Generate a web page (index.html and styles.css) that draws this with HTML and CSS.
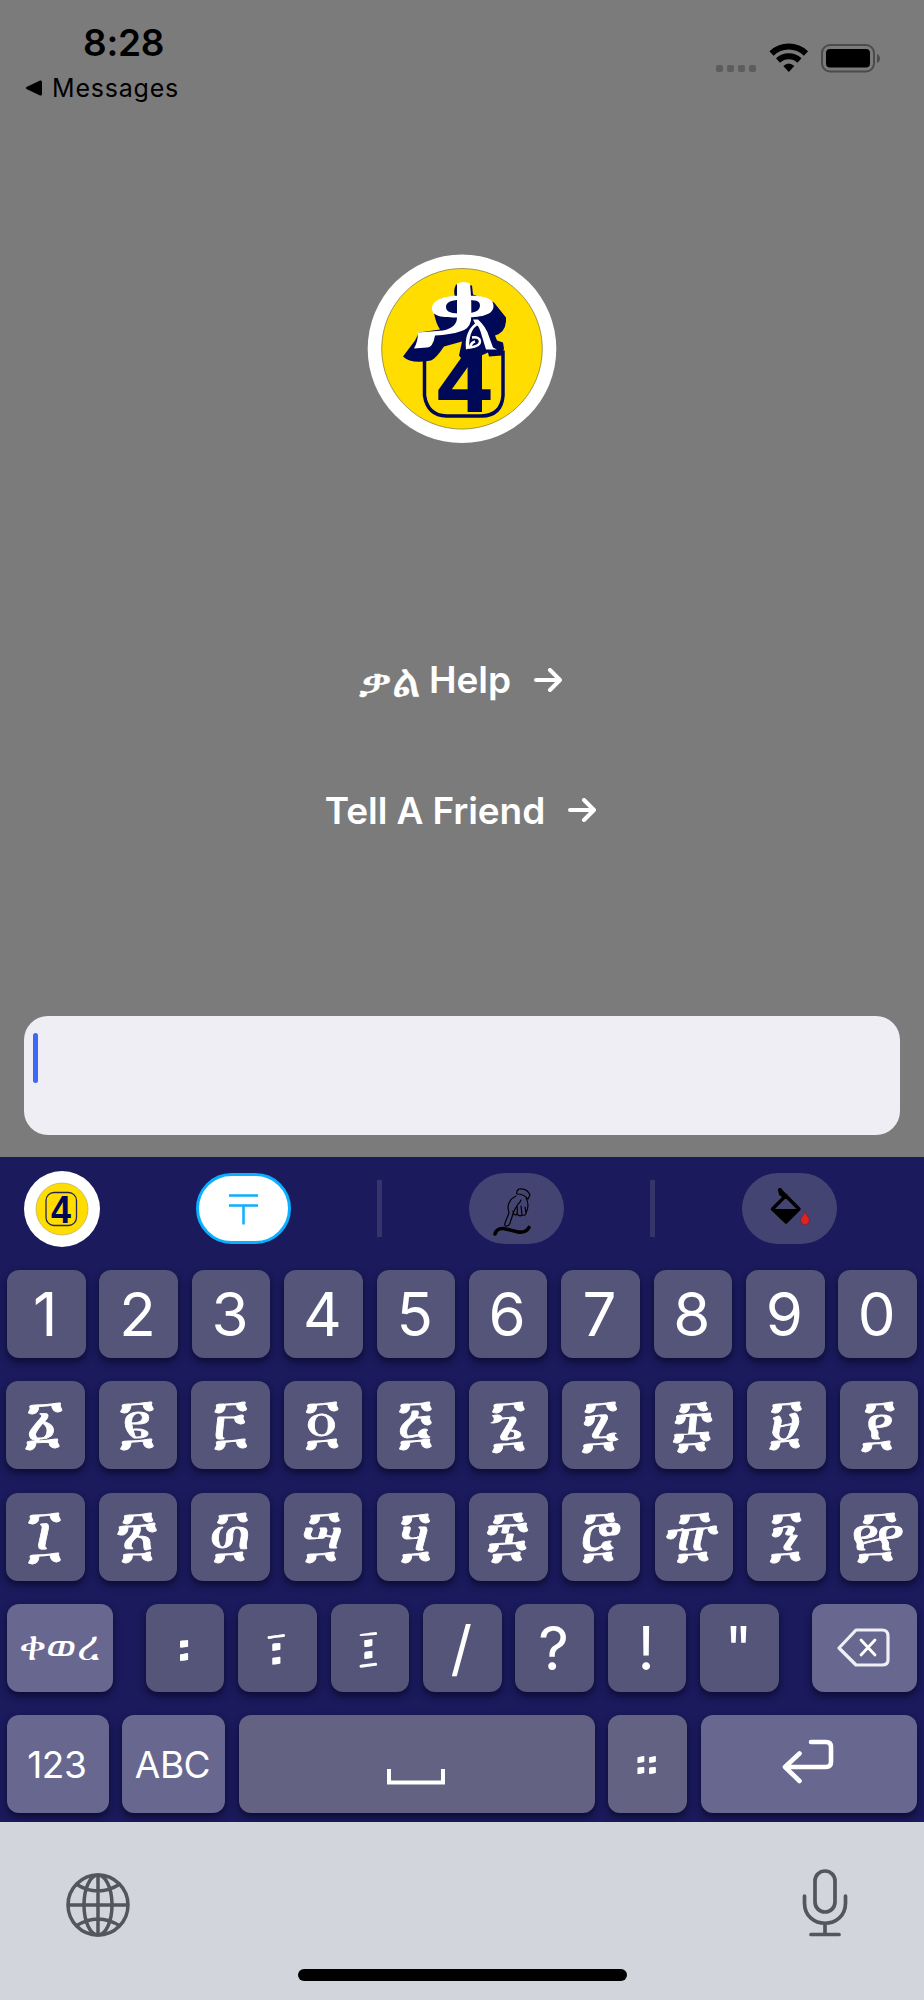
FILE: index.html
```
<!DOCTYPE html>
<html lang="am">
<head>
    <meta charset="utf-8">
    <title>ቃል</title>
    <link rel="stylesheet" href="styles.css">
</head>
<body>
    <div class="status">
        <div class="status-left">
            <div class="time">8:28</div>
            <div class="back"><svg width="17" height="16" viewBox="0 0 17 16"><path d="M1.5 7 15 .5Q17 0 17 2v12q0 2-2 1.500L1.500 9Q0 8 1.500 7Z"/></svg>Messages</div>
        </div>
        <div class="status-right">
            <svg width="170" height="34" viewBox="0 0 170 34">
                <g fill="#5d5d5d"><rect x="6" y="24" width="7" height="7" rx="2"/><rect x="17" y="24" width="7" height="7" rx="2"/><rect x="28" y="24" width="7" height="7" rx="2"/><rect x="39" y="24" width="7" height="7" rx="2"/></g>
                <g fill="none" stroke="#000" stroke-width="6"><path d="M61.500 12.500a25 25 0 0 1 34.500 0"/><path d="M68 19.500a16 16 0 0 1 21.500 0"/></g>
                <path d="M73.300 25q5.500-5 11 0L78.800 31Z"/>
                <rect x="112" y="4" width="52" height="26.500" rx="8" fill="none" stroke="#4b4b4b" stroke-width="2"/>
                <rect x="116" y="8" width="44" height="18.500" rx="4"/>
                <path d="M167 13q3 1.500 3 4.500t-3 4.500Z" fill="#4b4b4b"/>
            </svg>
        </div>
    </div>

    <!-- app screen -->
    <div class="main">
        <svg class="logo" width="190" height="190" viewBox="15 13.500 190 190">
            <circle cx="110" cy="108.300" r="94.300" fill="#fff"/>
            <circle cx="110" cy="108.300" r="80.300" fill="#ffdd00" stroke="#77733a" stroke-width=".7"/>
            <path d="M72.500 112v43q3 20 22 20.500h35q20-.5 21.500-20.500v-45" fill="none" stroke="#000957" stroke-width="3.500"/>
            <path d="M104 44q-3 6-1 12L82 73q2 10 6 16l-21 3-4 8-12 16q8 8 28 4 5-2 13-14l18-5-3 14 4 5 14-3 11-5 1 4 13-1 2-7-1-6-6-2-2-5q10-3 11-14v-4L142 62l-21-8-1-9Z" fill="#000957"/>
            <text class="logo-four" x="112" y="170" textLength="52" lengthAdjust="spacingAndGlyphs">4</text>
            <path d="M110.500 55c17 0 31 1 31 10.500S128 77 110.500 77 80 77 80 68s13-13 30.500-13Zm0 4.500C100 59 94 61 94 66.500S100 73 110.500 73 128 71 128 65s-7-5.500-17.500-5.500Z" fill="#fff" fill-rule="evenodd"/>
            <path d="M105 43q7-3 13 0 2 20 1 37-2 9-11 11-9 3-25 4-2 12-8 12l-13 1q4-7 4-16 13-1 25-2 14-3 14-13Z" fill="#fff"/>
            <path d="M121 79 126 79Q134 86 137 96L141 107 145 109 134 109 130 96Q127 85 125 85 117 90 117 108L114 109Q112 92 123 83Z" fill="#fff"/>
            <path d="M120 97q8-1 8 4t-10 6q1-5 5-6" stroke="#fff" stroke-width="2.500" fill="none"/>
        </svg>

        <div class="links">
            <a class="link"><span class="geez">ቃል</span><span class="help-text">Help</span><svg class="arrow" viewBox="0 0 28 24"><path d="M2 12h24M16 2l10 10-10 10"/></svg></a>
            <a class="link"><span class="friend-text">Tell A Friend</span><svg class="arrow" viewBox="0 0 28 24"><path d="M2 12h24M16 2l10 10-10 10"/></svg></a>
        </div>

        <div class="input"><div class="cursor"></div></div>
    </div>

    <div class="keyboard">
        <div class="toolbar">
            <svg class="mini-logo" width="76" height="76" viewBox="0 0 76 76">
                <circle cx="38" cy="38" r="38" fill="#fff"/>
                <circle cx="38" cy="38" r="26" fill="#ffdd00" stroke="#b5ae67" stroke-width=".7"/>
                <rect x="22" y="21.500" width="30.500" height="33" rx="8" fill="none" stroke="#26245a" stroke-width="1.300"/>
                <text class="mini-four" x="37" y="51.500" textLength="20" lengthAdjust="spacingAndGlyphs">4</text>
            </svg>
            <div class="pill active"><svg width="29" height="32" viewBox="0 0 29 32"><path d="M0 2.500h29M0 12.500h29M14.500 12.500v19" fill="none" stroke="#0aafff" stroke-width="2.500"/></svg></div>
            <div class="sep"></div>
            <div class="pill">
                <svg width="95" height="71" viewBox="0 0 95 71" fill="none" stroke="#000" stroke-width="1.200" stroke-linejoin="round" stroke-linecap="round">
                    <path d="M48 21q-1-3 2-5 8-1 11 6l-2 4q-4-5-11-5ZM47 23q-8 4-8 12l1 5-4 10q-1 4 2 3 2 0 3-3l4-12M57 25q4 7 0 15M44 38q0 4 3 4 2-1 1-9m0 8q3 3 5 1l-1-9m1 9q4 1 4-2l-1-6M45 38l4-7q2-1 3-4"/>
                    <path d="M26 61q2-6 8-5.500 8 1.500 15 3.500 8 1 11-4.500" stroke-width="3.600"/>
                </svg>
            </div>
            <div class="sep"></div>
            <div class="pill">
                <svg width="95" height="71" viewBox="0 0 95 71">
                    <path d="M38 17 57 36 44 49 30.500 36 44 22.500" fill="none" stroke="#000" stroke-width="3.500" stroke-linejoin="round" stroke-linecap="round"/>
                    <path d="M31 36h26L44 49.500Z"/><path d="m38 17 1 4 5 3" fill="none" stroke="#000" stroke-width="4" stroke-linecap="round"/>
                    <path d="M63 38q1 4 4 7a4.300 5 0 1 1-8 0q3-3 4-7Z" fill="#e3221f" stroke="#50203c" stroke-width=".5"/>
                </svg>
            </div>
        </div>

        <div class="row">
            <div class="key">1</div><div class="key">2</div><div class="key">3</div><div class="key">4</div><div class="key">5</div><div class="key">6</div><div class="key">7</div><div class="key">8</div><div class="key">9</div><div class="key">0</div>
        </div>
        <div class="row numerals">
            <div class="key">፩</div><div class="key">፪</div><div class="key">፫</div><div class="key">፬</div><div class="key">፭</div><div class="key">፮</div><div class="key">፯</div><div class="key">፰</div><div class="key">፱</div><div class="key">፻</div>
        </div>
        <div class="row numerals">
            <div class="key">፲</div><div class="key">፳</div><div class="key">፴</div><div class="key">፵</div><div class="key">፶</div><div class="key">፷</div><div class="key">፸</div><div class="key">፹</div><div class="key">፺</div><div class="key">፼</div>
        </div>
        <div class="row marks">
            <div class="key fn geez-fn">ቀወረ</div>
            <div class="key">፡</div><div class="key">፣</div><div class="key">፤</div><div class="key">/</div><div class="key">?</div><div class="key">!</div><div class="key">"</div>
            <div class="key fn">
                <svg width="54" height="40" viewBox="0 0 54 40" fill="none" stroke="#fff" stroke-width="3.200" stroke-linejoin="round" stroke-linecap="round"><path d="M19 2h26q6 0 6 6v24q0 5-6 5H19L2 20Z" opacity=".9"/><path d="m24 12 14 15m0-15L24 27" stroke-width="2.800"/></svg>
            </div>
        </div>
        <div class="row bottom">
            <div class="key fn">123</div>
            <div class="key fn">ABC</div>
            <div class="key space"><svg width="58" height="16" viewBox="0 0 58 16"><path d="M2 0v13.500h54V0" fill="none" stroke="#fff" stroke-width="4"/></svg></div>
            <div class="key stop">።</div>
            <div class="key fn enter"><svg width="52" height="45" viewBox="0 0 52 45" fill="none" stroke="#fff" stroke-width="4.600" stroke-linecap="round" stroke-linejoin="round"><path d="M29 3h15q5 0 5 5v15q0 5-5 5H3M17.500 14.500 3 28l14.500 14"/></svg></div>
        </div>
    </div>

    <div class="dock">
        <div class="dock-icons">
            <svg width="66" height="66" viewBox="0 0 66 66" fill="none" stroke="#53565d" stroke-width="3.500"><circle cx="33" cy="33" r="30"/><ellipse cx="33" cy="33" rx="14" ry="30"/><path d="M33 2.500v61M2.500 33h61M11 12q22 14 44 0M11 54q22-14 44 0"/></svg>
            <svg width="46" height="68" viewBox="0 0 46 68" fill="none" stroke="#53565d" stroke-width="3.700" stroke-linecap="round"><rect x="13" y="2" width="20" height="41" rx="10"/><path d="M2.500 27v7c0 27 41 27 41 0v-7M23 55v10M9 65.500h28"/></svg>
        </div>
        <div class="home-bar"></div>
    </div>
</body>
</html>
```
FILE: styles.css
```
* {
    box-sizing: border-box;
}

body {
    margin: 0;
    width: 924px;
    height: 2000px;
    background: #7b7b7b;
    font-family: Inter, "Noto Sans", sans-serif;
    overflow: hidden;
    display: flex;
    flex-direction: column;
}

svg {
    display: block;
    flex: none;
}

.status {
    height: 120px;
    display: flex;
    justify-content: space-between;
    padding: 20px 44px 0 25px;
}

.time {
    padding-left: 58px;
    font-size: 37px;
    font-weight: 600;
    line-height: 45px;
    letter-spacing: -0.3px;
}

.back {
    display: flex;
    align-items: center;
    gap: 10px;
    margin-top: 8px;
    font-size: 25px;
    line-height: 30px;
    letter-spacing: 0.8px;
}

.status-right {
    padding-top: 21px;
}

.main {
    height: 1037px;
    display: flex;
    flex-direction: column;
    align-items: center;
    padding-top: 134px;
}

.logo-four,
.mini-four {
    font-family: "Liberation Sans", Arial, sans-serif;
    font-weight: bold;
    fill: #000957;
    text-anchor: middle;
}

.logo-four {
    font-size: 86px;
    stroke: #000957;
    stroke-width: 2px;
}

.mini-four {
    font-size: 39px;
}

.links {
    display: flex;
    flex-direction: column;
    align-items: center;
    gap: 70px;
    margin-top: 206px;
    padding-right: 3px;
    color: #fff;
}

.link {
    display: flex;
    align-items: center;
    height: 60px;
    font-size: 37px;
    font-weight: 600;
    letter-spacing: -0.1px;
}

.help-text {
    margin-top: -1px;
}

.geez {
    width: 59px;
    margin-right: 11px;
    font-size: 45px;
    font-weight: 400;
    line-height: 60px;
    white-space: nowrap;
    -webkit-text-stroke: 0.5px #fff;
}

.arrow {
    width: 28px;
    height: 24px;
    margin-left: 23px;
    fill: none;
    stroke: #fff;
    stroke-width: 4;
    stroke-linecap: round;
    stroke-linejoin: round;
}

.input {
    width: 876px;
    height: 119px;
    margin-top: auto;
    margin-bottom: 22px;
    border-radius: 24px;
    background: #efeef4;
    padding: 17px 9px;
}

.cursor {
    width: 5px;
    height: 50px;
    border-radius: 3px;
    background: #3d69f5;
}

/* keyboard */
.keyboard {
    height: 665px;
    background: #1a1a5c;
    overflow: hidden;
}

.toolbar {
    height: 113px;
    display: flex;
    align-items: center;
    padding: 0 87px 10px 24px;
}

.pill {
    width: 95px;
    height: 71px;
    border-radius: 36px;
    background: #444473;
    display: flex;
    align-items: center;
    justify-content: center;
}

.active {
    background: #fff;
    border: 3px solid #0aafff;
    margin-left: 96px;
}

.sep {
    width: 5px;
    height: 57px;
    margin: 0 87px 0 86px;
    background: #35356c;
}

.row {
    height: 88px;
    margin-bottom: 23.3px;
    padding: 0 7px;
    display: grid;
    grid-template-columns: repeat(10, 78.5px);
    justify-content: space-between;
}

.key {
    background: #555479;
    border-radius: 12px;
    box-shadow: 0 4px 7px rgba(0, 0, 20, 0.55);
    color: #fff;
    font-size: 60px;
    line-height: 1;
    padding-right: 2px;
    display: flex;
    align-items: center;
    justify-content: center;
    overflow: hidden;
}

.fn {
    background: #68678f;
    font-size: 37px;
}

.numerals {
    padding: 0 5.5px 0 6px;
}

.numerals .key {
    font-size: 62px;
    padding-bottom: 9px;
    -webkit-text-stroke: 0.8px #fff;
}

.marks {
    display: flex;
    justify-content: flex-start;
    gap: 13.9px;
}

.marks .key {
    width: 78.5px;
}

.marks .fn {
    width: 106px;
}

.marks .fn:first-child {
    margin-right: 19px;
}

.marks .fn:last-child {
    width: 105px;
    margin-left: auto;
}

.marks .geez-fn {
    font-size: 41px;
    letter-spacing: -0.5px;
    padding-bottom: 5px;
}

.bottom {
    height: 98px;
    grid-template-columns: 101.5px 102.5px 356px 78.5px 216.5px;
}

.bottom .fn {
    letter-spacing: -0.5px;
}

.space,
.stop {
    background: #636282;
}

.stop {
    font-size: 50px;
}

.space {
    padding-top: 26px;
}

.enter {
    padding-bottom: 5px;
}

/* system bar */
.dock {
    height: 178px;
    background: #d2d5db;
}

.dock-icons {
    height: 147px;
    display: flex;
    justify-content: space-between;
    align-items: center;
    padding: 18px 76px 0 65px;
}

.dock-icons svg:last-child {
    margin-bottom: 4px;
}

.home-bar {
    width: 329px;
    height: 12px;
    margin: 0 auto;
    border-radius: 6px;
    background: #000;
}
```
